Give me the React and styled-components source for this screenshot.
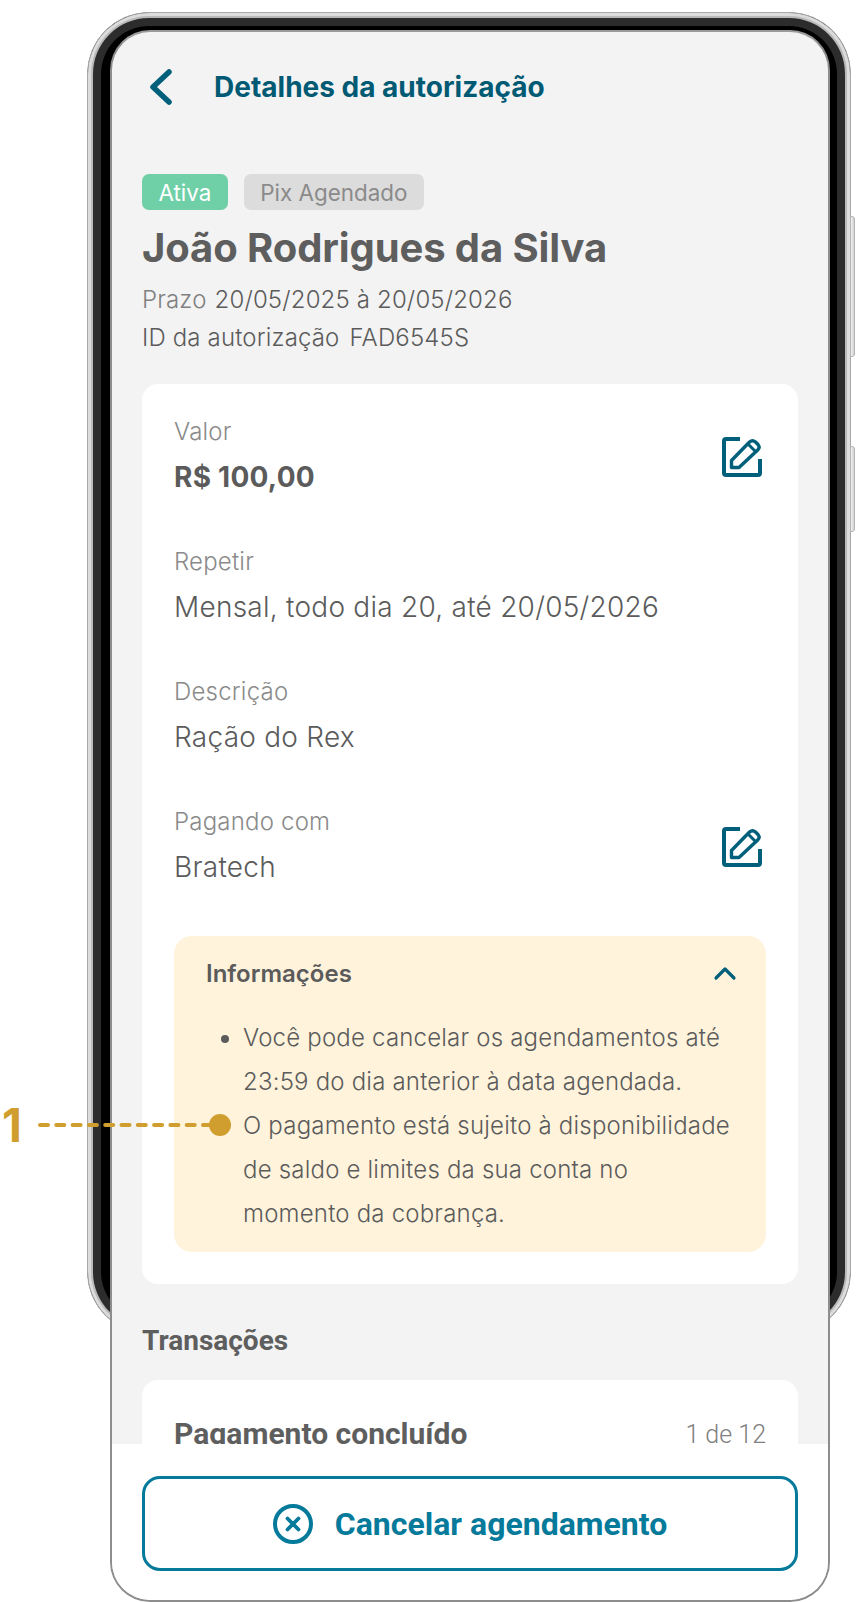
import React from "react";
import styled, { createGlobalStyle } from "styled-components";

const Global = createGlobalStyle`
  html, body { margin: 0; padding: 0; background: #fff; }
  body { font-family: Inter, "Liberation Sans", sans-serif; }
  * { box-sizing: border-box; }
`;

const Page = styled.div`
  position: relative;
  width: 856px;
  height: 1602px;
  overflow: hidden;
  background: #fff;
  padding: 30px 0 0 110px;
`;

const PhoneFrame = styled.div`
  position: absolute;
  left: 87px;
  top: 12px;
  width: 764px;
  height: 1322px;
  border-radius: 62px;
  background: #000;
  border: 1px solid #a8a8a8;
  box-shadow: inset 0 0 0 3px #dcdcdc, inset 0 0 0 5px #b9b9b9, inset 0 0 0 13px #2c2c2c;
`;

const SideButton = styled.div`
  position: absolute;
  left: 850px;
  top: ${(p) => p.$top}px;
  width: 5px;
  height: ${(p) => p.$h}px;
  border-radius: 0 3px 3px 0;
  border: 1px solid #b5b5b5;
  background: linear-gradient(90deg, #f2f2f2, #cfcfcf);
`;

const Screen = styled.div`
  position: relative;
  width: 720px;
  height: 1572px;
  display: flex;
  flex-direction: column;
  overflow: hidden;
  background: #f3f3f3;
  border: 2px solid #8d8d8d;
  border-top-color: #9a9a9a;
  border-radius: 40px;
`;

const Scroll = styled.div`
  flex: 1;
  min-height: 0;
  overflow: hidden;
  padding: 0 30px;
`;

const Header = styled.header`
  height: 110px;
  display: flex;
  align-items: center;
  gap: 38px;
  padding: 0 0 0 4px;
`;

const Title = styled.h1`
  margin: 0;
  font-size: 28px;
  line-height: 32px;
  font-weight: 700;
  color: #005a74;
`;

const Badges = styled.div`
  display: flex;
  gap: 16px;
  margin-top: 32px;
`;

const Badge = styled.span`
  height: 36px;
  padding: 0 16.5px;
  display: inline-flex;
  align-items: center;
  border-radius: 7px;
  font-size: 22.4px;
  background: ${(p) => (p.$green ? "#6fd0a8" : "#dcdcdc")};
  color: ${(p) => (p.$green ? "#ffffff" : "#8a8a8a")};
`;

const Name = styled.h2`
  margin: 10px 0 5px;
  font-size: 40px;
  line-height: 56px;
  font-weight: 700;
  letter-spacing: -0.1px;
  color: #5e5e5e;
`;

const Meta = styled.div`
  display: flex;
  gap: 10px;
  font-size: 24px;
  line-height: 38px;
  font-weight: 300;
  letter-spacing: 0.15px;
  color: #5b5b5b;
`;

const MetaLabel = styled.span`
  color: ${(p) => (p.$soft ? "#808080" : "#5b5b5b")};
  margin-right: ${(p) => (p.$soft ? -2 : 0)}px;
  font-weight: 300;
`;

const Card = styled.section`
  margin-top: 27px;
  background: #fff;
  border-radius: 16px;
  padding: 31px 32px 32px;
`;

const Row = styled.div`
  height: 130px;
  display: flex;
  justify-content: space-between;
  align-items: flex-start;
`;

const FieldLabel = styled.div`
  font-size: 24px;
  line-height: 34px;
  color: #8a8a8a;
  font-weight: 300;
  letter-spacing: 0.2px;
`;

const FieldValue = styled.div`
  margin-top: 11px;
  font-size: 28px;
  line-height: 34px;
  font-weight: ${(p) => (p.$strong ? 700 : 300)};
  letter-spacing: 0.25px;
  color: #5b5b5b;
`;

const EditButton = styled.span`
  display: block;
  width: 40px;
  height: 40px;
  margin: 22px 4px 0 0;
  color: #005f7a;
`;

const InfoBox = styled.div`
  margin-top: 1px;
  background: #fff3dc;
  border-radius: 18px;
  padding: 20px 32px 16px;
`;

const InfoHead = styled.div`
  display: flex;
  justify-content: space-between;
  align-items: center;
  height: 34px;
`;

const InfoTitle = styled.span`
  font-size: 24px;
  font-weight: 600;
  color: #5b5b5b;
`;

const InfoList = styled.ul`
  margin: 26px 0 0;
  padding: 0 2px 0 37px;
  font-size: 24px;
  line-height: 44px;
  font-weight: 300;
  letter-spacing: 0.2px;
  color: #5b5b5b;
`;

const SectionTitle = styled.h3`
  margin: 39px 0 0;
  font-family: Roboto, sans-serif;
  font-size: 28px;
  line-height: 36px;
  font-weight: 700;
  color: #5e5e5e;
`;

const TxCard = styled.section`
  margin-top: 21px;
  background: #fff;
  border-radius: 16px;
  padding: 37px 32px 40px;
  display: flex;
  justify-content: space-between;
  align-items: center;
`;

const TxTitle = styled.span`
  font-family: Roboto, sans-serif;
  font-size: 30px;
  line-height: 34px;
  font-weight: 700;
  color: #5e5e5e;
`;

const TxCount = styled.span`
  font-family: Roboto, sans-serif;
  font-size: 25px;
  font-weight: 300;
  color: #808080;
`;

const Footer = styled.footer`
  flex: none;
  height: 156px;
  padding: 32px 30px 0;
  background: #fff;
`;

const CancelButton = styled.button`
  width: 100%;
  height: 95px;
  display: flex;
  align-items: center;
  justify-content: center;
  gap: 22px;
  background: #fff;
  border: 3px solid #067a9a;
  border-radius: 18px;
  color: #067a9a;
  font-family: Roboto, sans-serif;
  font-size: 32px;
  font-weight: 700;
`;

const Annotation = styled.div`
  position: absolute;
  left: 2px;
  top: 1100px;
  height: 50px;
  display: flex;
  align-items: center;
  gap: 17px;
`;

const AnnotationNumber = styled.span`
  width: 19px;
  font-size: 46px;
  line-height: 50px;
  font-weight: 700;
  color: #d09e2e;
`;

const Chevron = styled.svg`
  margin-right: -3px;
`;

const Back = () => (
  <svg width="30" height="38" viewBox="0 0 30 38" fill="none">
    <path d="M23 4 L7 19 L23 34" stroke="#005f7a" strokeWidth="5.5" strokeLinecap="round" strokeLinejoin="round" />
  </svg>
);

const Edit = () => (
  <svg width="40" height="40" viewBox="0 0 40 40" fill="none" stroke="currentColor">
    <path d="M18 2 H4 Q2 2 2 4 V36 Q2 38 4 38 H36 Q38 38 38 36 V22" strokeWidth="4" strokeLinecap="butt" />
    <path d="M9.5 23.5 L27.5 5 Q30.5 2.4 33.5 5 L36 7.5 Q38.4 10.4 35.7 13 L17 30.5 H9.5 Z" strokeWidth="3.4" strokeLinejoin="round" />
    <path d="M26.5 7.5 L33 14" strokeWidth="3" />
  </svg>
);

const ChevronUp = () => (
  <Chevron width="24" height="16" viewBox="0 0 24 16" fill="none">
    <path d="M3 13 L12 4 L21 13" stroke="#005f7a" strokeWidth="3.2" strokeLinecap="round" strokeLinejoin="round" />
  </Chevron>
);

const CircleX = () => (
  <svg width="40" height="40" viewBox="0 0 40 40" fill="none" stroke="#067a9a">
    <circle cx="20" cy="20" r="18" strokeWidth="4" />
    <path d="M14.5 14.5 L25.5 25.5 M25.5 14.5 L14.5 25.5" strokeWidth="3.8" strokeLinecap="round" />
  </svg>
);

const Leader = () => (
  <svg width="194" height="24" viewBox="0 0 194 24" fill="none">
    <path d="M2 12 H172" stroke="#d09e2e" strokeWidth="4" strokeLinecap="round" strokeDasharray="8 8.3" />
    <circle cx="182" cy="12" r="11" fill="#d09e2e" />
  </svg>
);

const fields = [
  { label: "Valor", value: "R$ 100,00", strong: true, edit: true },
  { label: "Repetir", value: "Mensal, todo dia 20, até 20/05/2026" },
  { label: "Descrição", value: "Ração do Rex" },
  { label: "Pagando com", value: "Bratech", edit: true },
];

export default function App() {
  return (
    <Page>
      <Global />
      <PhoneFrame />
      <SideButton $top={216} $h={141} />
      <SideButton $top={446} $h={86} />
      <Screen>
        <Scroll>
          <Header>
            <Back />
            <Title>Detalhes da autorização</Title>
          </Header>
          <Badges>
            <Badge $green>Ativa</Badge>
            <Badge>Pix Agendado</Badge>
          </Badges>
          <Name>João Rodrigues da Silva</Name>
          <Meta>
            <MetaLabel $soft>Prazo</MetaLabel>
            <span>20/05/2025 à 20/05/2026</span>
          </Meta>
          <Meta>
            <MetaLabel>ID da autorização</MetaLabel>
            <span>FAD6545S</span>
          </Meta>
          <Card>
            {fields.map((f) => (
              <Row key={f.label}>
                <div>
                  <FieldLabel>{f.label}</FieldLabel>
                  <FieldValue $strong={f.strong}>{f.value}</FieldValue>
                </div>
                {f.edit && (
                  <EditButton>
                    <Edit />
                  </EditButton>
                )}
              </Row>
            ))}
            <InfoBox>
              <InfoHead>
                <InfoTitle>Informações</InfoTitle>
                <ChevronUp />
              </InfoHead>
              <InfoList>
                <li>Você pode cancelar os agendamentos até 23:59 do dia anterior à data agendada.</li>
                <li>O pagamento está sujeito à disponibilidade de saldo e limites da sua conta no momento da cobrança.</li>
              </InfoList>
            </InfoBox>
          </Card>
          <SectionTitle>Transações</SectionTitle>
          <TxCard>
            <TxTitle>Pagamento concluído</TxTitle>
            <TxCount>1 de 12</TxCount>
          </TxCard>
        </Scroll>
        <Footer>
          <CancelButton>
            <CircleX />
            Cancelar agendamento
          </CancelButton>
        </Footer>
      </Screen>
      <Annotation>
        <AnnotationNumber>1</AnnotationNumber>
        <Leader />
      </Annotation>
    </Page>
  );
}
